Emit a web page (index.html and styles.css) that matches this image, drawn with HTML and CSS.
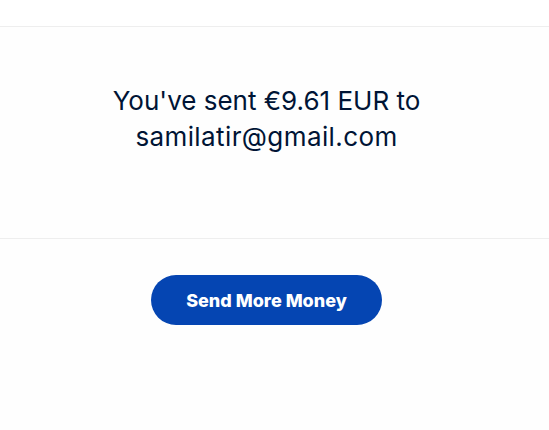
FILE: index.html
```html
<!DOCTYPE html>
<html lang="en">
<head>
<meta charset="utf-8">
<title>Payment sent</title>
<link rel="stylesheet" href="styles.css">
</head>
<body>
<header class="topbar"></header>
<main class="page">
  <section class="message">
    <h1 class="message-text">You've sent €9.61 EUR to<br><span class="recipient">samilatir@gmail.com</span></h1>
  </section>
  <section class="actions">
    <button class="btn-primary" type="button">Send More Money</button>
  </section>
</main>
</body>
</html>
```
FILE: styles.css
```css
* { box-sizing: border-box; }
html, body { margin: 0; padding: 0; }
body {
  background: #fefefe;
  font-family: Inter, "Noto Sans", "Liberation Sans", sans-serif;
  color: #001435;
  width: 549px;
  height: 430px;
  overflow: hidden;
}
.topbar {
  height: 27px;
  background: #ffffff;
  border-bottom: 1px solid #eeeeee;
}
.page {
  display: flex;
  flex-direction: column;
}
.message {
  height: 212px;
  border-bottom: 1px solid #eeeeee;
  padding: 56px 16px 0 0;
  display: flex;
  justify-content: center;
}
.message-text {
  margin: 0;
  font-size: 26px;
  font-weight: 400;
  line-height: 36px;
  text-align: center;
  letter-spacing: 0;
}
.recipient {
  letter-spacing: 0.4px;
}
.actions {
  display: flex;
  justify-content: center;
  padding: 36px 16px 0 0;
}
.btn-primary {
  width: 231px;
  height: 50px;
  border: none;
  border-radius: 25px;
  background: #0545b2;
  color: #ffffff;
  font-family: inherit;
  font-size: 18px;
  font-weight: 800;
  letter-spacing: 0;
  cursor: pointer;
}
```
